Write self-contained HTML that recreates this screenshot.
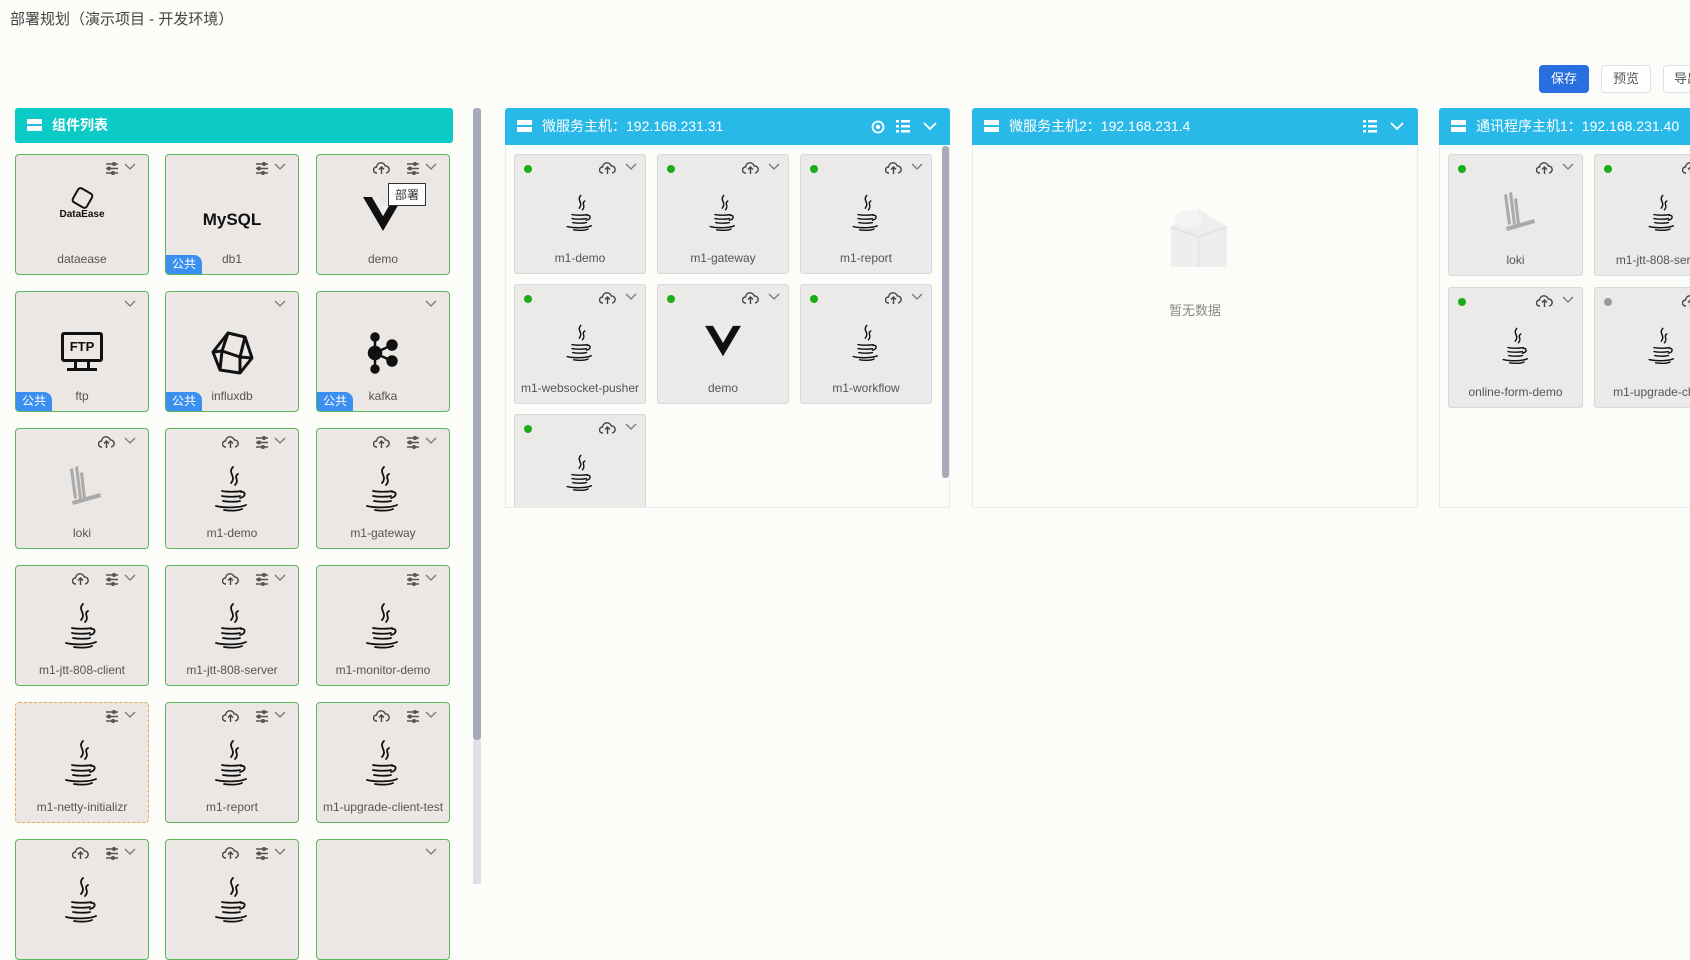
<!DOCTYPE html>
<html><head><meta charset="utf-8"><style>
*{box-sizing:border-box;margin:0;padding:0}
body{width:1690px;height:884px;overflow:hidden;background:#fcfcf8;font-family:"Liberation Sans","Noto Sans CJK SC",sans-serif;position:relative;color:#333}
.title{position:absolute;left:10px;top:8px;font-size:15px;color:#444}
.btn{position:absolute;top:65px;height:28px;border-radius:4px;font-size:13px;line-height:26px;text-align:center;border:1px solid #dcdfe6;background:#fff;color:#555}
.hdr{position:absolute;height:37px;color:#fff;font-size:14px;line-height:37px;padding-left:37px;border-radius:3px 3px 0 0}
.hdr .ic{position:absolute;left:12px;top:12px;width:15px;height:12px;background:#fff;border-radius:1px}
.hdr .ic:after{content:"";position:absolute;left:0;right:0;top:5px;height:2px;background:#2bb8e6}
.panel{position:absolute;border:1px solid #e6ecef;border-top:none}
.card{position:absolute;width:134px;height:121px;border:1.5px solid #5cb85c;border-radius:4px;background:#ebe7e4}
.mc{position:absolute;width:132px;height:120px;border:1px solid #d5d8dc;border-radius:3px;background:#eceae8}
.lbl{position:absolute;left:0;right:0;bottom:8px;text-align:center;font-size:12px;color:#555;white-space:nowrap;overflow:hidden}
.chev{position:absolute;top:8px;width:12px;height:8px}
.sl{position:absolute;top:7px;width:14px;height:13px}
.cl{position:absolute;top:6px;width:17px;height:14px}
.dot{position:absolute;left:9px;top:10px;width:8px;height:8px;border-radius:50%;background:#1aad19}
.pub{position:absolute;left:0;bottom:0;width:36px;height:19px;background:#3b8ff0;color:#fff;font-size:12px;line-height:19px;text-align:center;border-radius:0 8px 0 3px}
.ico{position:absolute;left:50%;transform:translateX(-50%)}
</style></head><body>
<svg width="0" height="0" style="position:absolute">
<defs>
<symbol id="java" viewBox="0 0 40 48"><g fill="none" stroke="#111" stroke-width="1.8" stroke-linecap="round"><path d="M21 2c-6 6 4 9-2 16"/><path d="M26 9c-5 3 2 6-3 11"/><path d="M10 26c5 1 15 1 19 0"/><path d="M29 27c5-1 5 5 -1 6"/><path d="M10 31c5 1 14 1 18 0"/><path d="M11 36c5 1 13 1 17 0"/><path d="M4 41c8 2 24 2 30-1"/><path d="M12 45c6 1 14 1 18-1"/></g></symbol>
<symbol id="chev" viewBox="0 0 12 8"><path d="M1 1l5 5 5-5" fill="none" stroke="#777" stroke-width="1.3"/></symbol>
<symbol id="sl" viewBox="0 0 14 13"><g stroke="#555" stroke-width="1.6"><path d="M1 2h12M1 6.5h12M1 11h12"/></g><g fill="#555"><circle cx="9" cy="2" r="2"/><circle cx="4" cy="6.5" r="2"/><circle cx="8" cy="11" r="2"/></g></symbol>
<symbol id="cl" viewBox="0 0 17 14"><path d="M4 12H3.5a3 3 0 0 1 0-6 4.5 4.5 0 0 1 8.8-1A3.5 3.5 0 0 1 13 12h-0" fill="none" stroke="#444" stroke-width="1.4"/><path d="M8.5 13V6M6 8.5l2.5-2.5 2.5 2.5" fill="none" stroke="#444" stroke-width="1.4"/></symbol>
<symbol id="vue" viewBox="0 0 40 34"><path d="M0 0h9l11 19 11-19h9L20 34z" fill="#111"/><path d="M9 0h6l5 9 5-9h6L20 19z" fill="#eee"/></symbol>
<symbol id="loki" viewBox="0 0 40 44"><g fill="#aaa"><path d="M8 4l3-1 4 30-3 1z"/><path d="M13 2l3-1 4 32-3 1z"/><path d="M18 8l3-1 3 26-3 1z"/><path d="M10 36l28-8 1 4-28 8z"/></g></symbol>
</defs></svg>

<div class="title">部署规划（演示项目 - 开发环境）</div>
<div class="btn" style="left:1539px;width:50px;background:#2a6fe0;border-color:#2a6fe0;color:#fff">保存</div>
<div class="btn" style="left:1601px;width:50px">预览</div>
<div class="btn" style="left:1663px;width:50px;text-align:left;padding-left:10px">导出</div>

<!-- left panel -->
<div class="hdr" style="left:15px;top:108px;width:438px;height:35px;line-height:35px;background:#0ccbc6;font-weight:bold;border-radius:3px"><span class="ic" style="top:11px"></span>组件列表</div>
<div style="position:absolute;left:473px;top:108px;width:8px;height:632px;background:#a7aab8;border-radius:3px"></div>
<div style="position:absolute;left:473px;top:740px;width:8px;height:144px;background:#dde0e8"></div>

<!-- row0 -->
<div class="card" style="left:15px;top:154px"><svg class="sl" style="left:89px"><use href="#sl"/></svg><svg class="chev" style="left:108px"><use href="#chev"/></svg>
<div class="ico" style="top:34px;text-align:center"><div style="width:18px;height:18px;margin:0 auto;border:2.5px solid #111;border-radius:4px;transform:rotate(30deg)"></div><div style="font-size:10px;font-weight:bold;color:#111;margin-top:2px">DataEase</div></div><div class="lbl">dataease</div></div>
<div class="card" style="left:165px;top:154px"><svg class="sl" style="left:89px"><use href="#sl"/></svg><svg class="chev" style="left:108px"><use href="#chev"/></svg>
<div class="ico" style="top:55px;font-size:17px;font-weight:bold;color:#111">MySQL</div><div class="lbl">db1</div><div class="pub">公共</div></div>
<div class="card" style="left:316px;top:154px"><svg class="cl" style="left:56px"><use href="#cl"/></svg><svg class="sl" style="left:89px"><use href="#sl"/></svg><svg class="chev" style="left:108px"><use href="#chev"/></svg>
<svg class="ico" style="top:40px" width="40" height="38"><use href="#vue"/></svg>
<div style="position:absolute;left:71px;top:28px;border:1px solid #333;background:#fff;font-size:12px;padding:2px 6px">部署</div><div class="lbl">demo</div></div>
<!-- row1 -->
<div class="card" style="left:15px;top:291px"><svg class="chev" style="left:108px"><use href="#chev"/></svg>
<div class="ico" style="top:40px;width:42px"><div style="border:3px solid #111;border-radius:3px;height:30px;font-size:13px;font-weight:bold;line-height:24px;text-align:center;color:#111">FTP</div><div style="width:16px;height:6px;margin:0 auto;border-left:3px solid #111;border-right:3px solid #111"></div><div style="height:3px;background:#111;margin:0 6px"></div></div><div class="lbl">ftp</div><div class="pub">公共</div></div>
<div class="card" style="left:165px;top:291px"><svg class="chev" style="left:108px"><use href="#chev"/></svg>
<svg class="ico" style="top:38px" width="44" height="46" viewBox="0 0 44 46"><g fill="none" stroke="#111" stroke-width="3" stroke-linejoin="round"><path d="M18 3L35 7 42 28 30 43 10 40 3 22z"/><path d="M18 3l-6 18 18 6 5-20M12 21L3 22M12 21l-2 19M30 27l0 16M30 27l12 1"/></g></svg><div class="lbl">influxdb</div><div class="pub">公共</div></div>
<div class="card" style="left:316px;top:291px"><svg class="chev" style="left:108px"><use href="#chev"/></svg>
<svg class="ico" style="top:40px" width="32" height="42" viewBox="0 0 32 42"><g fill="#111" stroke="#111" stroke-width="2.5"><circle cx="8" cy="5" r="3.5"/><circle cx="8" cy="21" r="6"/><circle cx="8" cy="37" r="3.5"/><circle cx="25" cy="13" r="4.5"/><circle cx="25" cy="29" r="4.5"/><path d="M8 5v32M8 21l17-8M8 21l17 8"/></g></svg><div class="lbl">kafka</div><div class="pub">公共</div></div>
<!-- row2 -->
<div class="card" style="left:15px;top:428px"><svg class="cl" style="left:82px"><use href="#cl"/></svg><svg class="chev" style="left:108px"><use href="#chev"/></svg><svg class="ico" style="top:36px" width="40" height="44"><use href="#loki"/></svg><div class="lbl">loki</div></div>
<div class="card" style="left:165px;top:428px"><svg class="cl" style="left:56px"><use href="#cl"/></svg><svg class="sl" style="left:89px"><use href="#sl"/></svg><svg class="chev" style="left:108px"><use href="#chev"/></svg><svg class="ico" style="top:36px" width="40" height="48"><use href="#java"/></svg><div class="lbl">m1-demo</div></div>
<div class="card" style="left:316px;top:428px"><svg class="cl" style="left:56px"><use href="#cl"/></svg><svg class="sl" style="left:89px"><use href="#sl"/></svg><svg class="chev" style="left:108px"><use href="#chev"/></svg><svg class="ico" style="top:36px" width="40" height="48"><use href="#java"/></svg><div class="lbl">m1-gateway</div></div>
<!-- row3 -->
<div class="card" style="left:15px;top:565px"><svg class="cl" style="left:56px"><use href="#cl"/></svg><svg class="sl" style="left:89px"><use href="#sl"/></svg><svg class="chev" style="left:108px"><use href="#chev"/></svg><svg class="ico" style="top:36px" width="40" height="48"><use href="#java"/></svg><div class="lbl">m1-jtt-808-client</div></div>
<div class="card" style="left:165px;top:565px"><svg class="cl" style="left:56px"><use href="#cl"/></svg><svg class="sl" style="left:89px"><use href="#sl"/></svg><svg class="chev" style="left:108px"><use href="#chev"/></svg><svg class="ico" style="top:36px" width="40" height="48"><use href="#java"/></svg><div class="lbl">m1-jtt-808-server</div></div>
<div class="card" style="left:316px;top:565px"><svg class="sl" style="left:89px"><use href="#sl"/></svg><svg class="chev" style="left:108px"><use href="#chev"/></svg><svg class="ico" style="top:36px" width="40" height="48"><use href="#java"/></svg><div class="lbl">m1-monitor-demo</div></div>
<!-- row4 -->
<div class="card" style="left:15px;top:702px;border:1px dashed #e8a650"><svg class="sl" style="left:89px"><use href="#sl"/></svg><svg class="chev" style="left:108px"><use href="#chev"/></svg><svg class="ico" style="top:36px" width="40" height="48"><use href="#java"/></svg><div class="lbl">m1-netty-initializr</div></div>
<div class="card" style="left:165px;top:702px"><svg class="cl" style="left:56px"><use href="#cl"/></svg><svg class="sl" style="left:89px"><use href="#sl"/></svg><svg class="chev" style="left:108px"><use href="#chev"/></svg><svg class="ico" style="top:36px" width="40" height="48"><use href="#java"/></svg><div class="lbl">m1-report</div></div>
<div class="card" style="left:316px;top:702px"><svg class="cl" style="left:56px"><use href="#cl"/></svg><svg class="sl" style="left:89px"><use href="#sl"/></svg><svg class="chev" style="left:108px"><use href="#chev"/></svg><svg class="ico" style="top:36px" width="40" height="48"><use href="#java"/></svg><div class="lbl">m1-upgrade-client-test</div></div>
<!-- row5 -->
<div class="card" style="left:15px;top:839px"><svg class="cl" style="left:56px"><use href="#cl"/></svg><svg class="sl" style="left:89px"><use href="#sl"/></svg><svg class="chev" style="left:108px"><use href="#chev"/></svg><svg class="ico" style="top:36px" width="40" height="48"><use href="#java"/></svg></div>
<div class="card" style="left:165px;top:839px"><svg class="cl" style="left:56px"><use href="#cl"/></svg><svg class="sl" style="left:89px"><use href="#sl"/></svg><svg class="chev" style="left:108px"><use href="#chev"/></svg><svg class="ico" style="top:36px" width="40" height="48"><use href="#java"/></svg></div>
<div class="card" style="left:316px;top:839px"><svg class="chev" style="left:108px"><use href="#chev"/></svg></div>

<!-- panel 1 -->
<div class="hdr" style="left:505px;top:108px;width:445px;background:#29b9e8"><span class="ic"></span>微服务主机：192.168.231.31
<svg style="position:absolute;left:366px;top:12px" width="14" height="14" viewBox="0 0 14 14"><circle cx="7" cy="7" r="5.5" fill="none" stroke="#fff" stroke-width="1.8"/><circle cx="7" cy="7" r="2.2" fill="#fff"/></svg>
<svg style="position:absolute;left:391px;top:11px" width="14" height="14" viewBox="0 0 14 14"><g fill="#fff"><rect x="0" y="1" width="3" height="2.5"/><rect x="0" y="6" width="3" height="2.5"/><rect x="0" y="11" width="3" height="2.5"/><rect x="5" y="1" width="9" height="2.5"/><rect x="5" y="6" width="9" height="2.5"/><rect x="5" y="11" width="9" height="2.5"/></g></svg>
<svg style="position:absolute;left:418px;top:14px" width="14" height="9" viewBox="0 0 14 9"><path d="M1 1l6 6 6-6" fill="none" stroke="#fff" stroke-width="1.8"/></svg></div>
<div class="panel" style="left:505px;top:145px;width:445px;height:363px;overflow:hidden">
<div style="position:absolute;left:436px;top:1px;width:7px;height:332px;background:#a7aab8;border-radius:3px"></div>
</div>
<div class="mc" style="left:514px;top:154px"><span class="dot"></span><svg class="cl" style="left:84px"><use href="#cl"/></svg><svg class="chev" style="left:110px"><use href="#chev"/></svg><svg class="ico" style="top:38px" width="32" height="40" viewBox="0 0 40 48"><use href="#java"/></svg><div class="lbl">m1-demo</div></div>
<div class="mc" style="left:657px;top:154px"><span class="dot"></span><svg class="cl" style="left:84px"><use href="#cl"/></svg><svg class="chev" style="left:110px"><use href="#chev"/></svg><svg class="ico" style="top:38px" width="32" height="40" viewBox="0 0 40 48"><use href="#java"/></svg><div class="lbl">m1-gateway</div></div>
<div class="mc" style="left:800px;top:154px"><span class="dot"></span><svg class="cl" style="left:84px"><use href="#cl"/></svg><svg class="chev" style="left:110px"><use href="#chev"/></svg><svg class="ico" style="top:38px" width="32" height="40" viewBox="0 0 40 48"><use href="#java"/></svg><div class="lbl">m1-report</div></div>
<div class="mc" style="left:514px;top:284px"><span class="dot"></span><svg class="cl" style="left:84px"><use href="#cl"/></svg><svg class="chev" style="left:110px"><use href="#chev"/></svg><svg class="ico" style="top:38px" width="32" height="40" viewBox="0 0 40 48"><use href="#java"/></svg><div class="lbl">m1-websocket-pusher</div></div>
<div class="mc" style="left:657px;top:284px"><span class="dot"></span><svg class="cl" style="left:84px"><use href="#cl"/></svg><svg class="chev" style="left:110px"><use href="#chev"/></svg><svg class="ico" style="top:40px" width="36" height="32" viewBox="0 0 40 34"><use href="#vue"/></svg><div class="lbl">demo</div></div>
<div class="mc" style="left:800px;top:284px"><span class="dot"></span><svg class="cl" style="left:84px"><use href="#cl"/></svg><svg class="chev" style="left:110px"><use href="#chev"/></svg><svg class="ico" style="top:38px" width="32" height="40" viewBox="0 0 40 48"><use href="#java"/></svg><div class="lbl">m1-workflow</div></div>
<div class="mc" style="left:514px;top:414px;height:94px;border-bottom:none;border-radius:3px 3px 0 0"><span class="dot"></span><svg class="cl" style="left:84px"><use href="#cl"/></svg><svg class="chev" style="left:110px"><use href="#chev"/></svg><svg class="ico" style="top:38px" width="32" height="40" viewBox="0 0 40 48"><use href="#java"/></svg></div>

<!-- panel 2 -->
<div class="hdr" style="left:972px;top:108px;width:446px;background:#29b9e8"><span class="ic"></span>微服务主机2：192.168.231.4
<svg style="position:absolute;left:391px;top:11px" width="14" height="14" viewBox="0 0 14 14"><g fill="#fff"><rect x="0" y="1" width="3" height="2.5"/><rect x="0" y="6" width="3" height="2.5"/><rect x="0" y="11" width="3" height="2.5"/><rect x="5" y="1" width="9" height="2.5"/><rect x="5" y="6" width="9" height="2.5"/><rect x="5" y="11" width="9" height="2.5"/></g></svg>
<svg style="position:absolute;left:418px;top:14px" width="14" height="9" viewBox="0 0 14 9"><path d="M1 1l6 6 6-6" fill="none" stroke="#fff" stroke-width="1.8"/></svg></div>
<div class="panel" style="left:972px;top:145px;width:446px;height:363px">
<svg style="position:absolute;left:186px;top:52px" width="80" height="78" viewBox="0 0 80 78"><path d="M12 30l28-18 28 18v40H12z" fill="#eeeeee"/><path d="M12 30l28 10 28-10" fill="none" stroke="#e3e3e3" stroke-width="2"/><path d="M40 40v30" stroke="#e6e6e6" stroke-width="2"/><ellipse cx="30" cy="22" rx="14" ry="9" fill="#f3f3f3"/></svg>
<div style="position:absolute;left:0;right:0;top:155px;text-align:center;font-size:13px;color:#888">暂无数据</div></div>

<!-- panel 3 -->
<div class="hdr" style="left:1439px;top:108px;width:260px;background:#29b9e8;border-radius:3px 0 0 0"><span class="ic"></span>通讯程序主机1：192.168.231.40</div>
<div class="panel" style="left:1439px;top:145px;width:260px;height:363px"></div>
<div class="mc" style="left:1448px;top:154px;width:135px;height:122px"><span class="dot"></span><svg class="cl" style="left:87px"><use href="#cl"/></svg><svg class="chev" style="left:113px"><use href="#chev"/></svg><svg class="ico" style="top:36px" width="40" height="44"><use href="#loki"/></svg><div class="lbl">loki</div></div>
<div class="mc" style="left:1594px;top:154px;width:135px;height:122px"><span class="dot"></span><svg class="cl" style="left:87px"><use href="#cl"/></svg><svg class="ico" style="top:38px" width="32" height="40" viewBox="0 0 40 48"><use href="#java"/></svg><div class="lbl">m1-jtt-808-server</div></div>
<div class="mc" style="left:1448px;top:287px;width:135px;height:121px"><span class="dot"></span><svg class="cl" style="left:87px"><use href="#cl"/></svg><svg class="chev" style="left:113px"><use href="#chev"/></svg><svg class="ico" style="top:38px" width="32" height="40" viewBox="0 0 40 48"><use href="#java"/></svg><div class="lbl">online-form-demo</div></div>
<div class="mc" style="left:1594px;top:287px;width:135px;height:121px"><span class="dot" style="background:#999"></span><svg class="cl" style="left:87px"><use href="#cl"/></svg><svg class="ico" style="top:38px" width="32" height="40" viewBox="0 0 40 48"><use href="#java"/></svg><div class="lbl">m1-upgrade-client</div></div>
</body></html>
